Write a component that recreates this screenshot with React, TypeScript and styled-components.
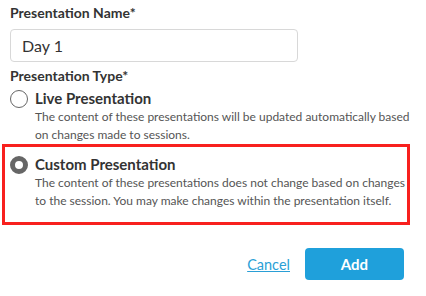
import React from "react";
import styled, { createGlobalStyle } from "styled-components";

const Global = createGlobalStyle`
  html, body { margin: 0; padding: 0; background: #fff; }
  body { font-family: Lato, "Open Sans", sans-serif; }
`;

const Page = styled.div`
  width: 426px;
  box-sizing: border-box;
  padding: 4px 0 0 0;
  display: flex;
  flex-direction: column;
`;

const Label = styled.div`
  font-size: 14px;
  font-weight: 700;
  color: #333;
  line-height: 18px;
  padding-left: 10px;
`;

const Input = styled.input`
  flex: none;
  margin: 7px 0 0 10px;
  width: 288px;
  height: 33px;
  box-sizing: border-box;
  border: 1px solid #d8d8d8;
  border-radius: 4px;
  padding: 0 11px;
  font-family: inherit;
  font-size: 16px;
  color: #333;
  outline: none;
`;

const TypeLabel = styled(Label)`
  margin-top: 5px;
`;

const Option = styled.div<{ $highlight?: boolean }>`
  display: flex;
  gap: 7px;
  align-items: flex-start;
  box-sizing: border-box;
  width: 408px;
  margin-left: 2px;
  padding: ${(p) => (p.$highlight ? "8px 6px 12px 5px" : "4px 8px 0 8px")};
  border: ${(p) => (p.$highlight ? "3px solid #f8201e" : "none")};
`;

const Radio = styled.span<{ $checked?: boolean }>`
  flex: none;
  width: 18px;
  height: 18px;
  box-sizing: border-box;
  border-radius: 50%;
  margin-top: 1px;
  border: ${(p) => (p.$checked ? "5px solid #666" : "1px solid #666")};
  background: #fff;
`;

const OptionBody = styled.div`
  display: flex;
  flex-direction: column;
`;

const OptionTitle = styled.div`
  font-size: 15px;
  font-weight: 700;
  color: #333;
  line-height: 19px;
`;

const Desc = styled.div`
  font-size: 12px;
  color: #555;
  line-height: 18px;
  white-space: nowrap;
`;

const Actions = styled.div`
  display: flex;
  justify-content: flex-end;
  align-items: center;
  gap: 15px;
  margin-top: 23px;
  padding-right: 22px;
`;

const CancelLink = styled.a`
  font-size: 14.5px;
  color: #2a9fd6;
  text-decoration: underline;
  cursor: pointer;
`;

const AddButton = styled.button`
  width: 99px;
  height: 32px;
  border: none;
  border-radius: 4px;
  background: #1fa0db;
  color: #fff;
  font-family: inherit;
  font-size: 15px;
  font-weight: 700;
`;

export default function App() {
  return (
    <>
      <Global />
      <Page>
        <Label>Presentation Name*</Label>
        <Input defaultValue="Day 1" />
        <TypeLabel>Presentation Type*</TypeLabel>
        <Option>
          <Radio />
          <OptionBody>
            <OptionTitle>Live Presentation</OptionTitle>
            <Desc>
              The content of these presentations will be updated automatically based
              <br />
              on changes made to sessions.
            </Desc>
          </OptionBody>
        </Option>
        <Option $highlight>
          <Radio $checked />
          <OptionBody>
            <OptionTitle>Custom Presentation</OptionTitle>
            <Desc>
              The content of these presentations does not change based on changes
              <br />
              to the session. You may make changes within the presentation itself.
            </Desc>
          </OptionBody>
        </Option>
        <Actions>
          <CancelLink>Cancel</CancelLink>
          <AddButton>Add</AddButton>
        </Actions>
      </Page>
    </>
  );
}
